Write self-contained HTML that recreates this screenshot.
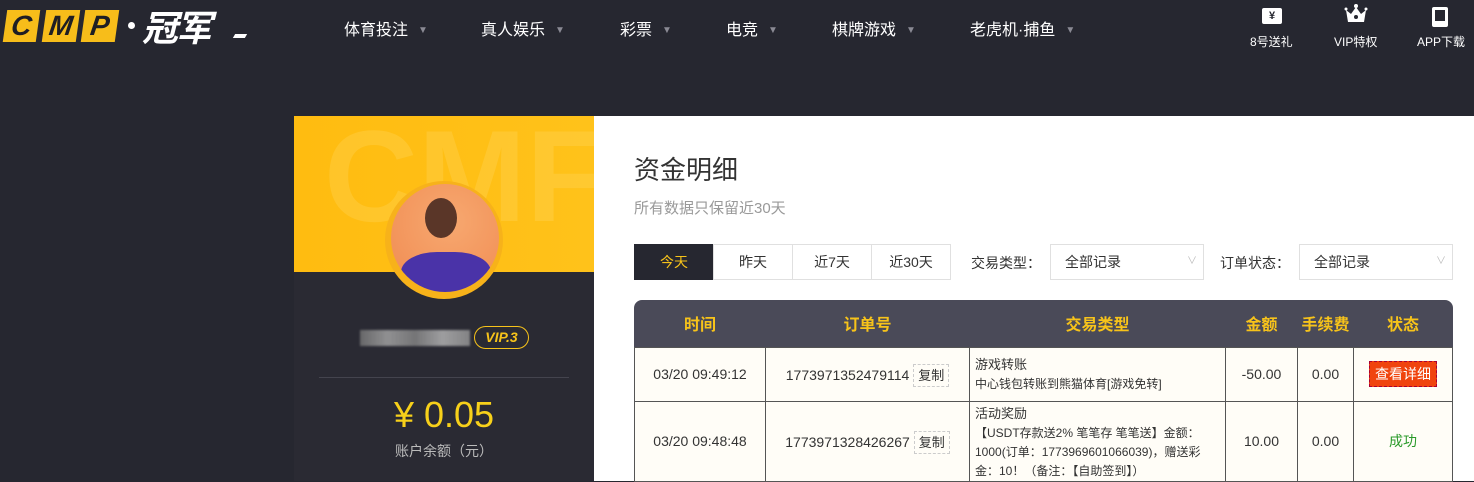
<!DOCTYPE html>
<html><head><meta charset="utf-8"><style>
*{margin:0;padding:0;box-sizing:border-box}
body{width:1474px;height:481px;overflow:hidden;background:#262730;font-family:"Liberation Sans","Noto Sans CJK SC",sans-serif;color:#fff;position:relative}
.abs{position:absolute}
.logo span.b{position:absolute;top:10px;width:34px;height:32px;background:#f7bd1a;color:#1e1e24;font:italic 900 28px/32px "Liberation Sans",sans-serif;text-align:center;transform:skewX(-8deg)}
.nav{position:absolute;top:16px;font-size:16px;color:#fff}
.nav i{font-style:normal;color:#8a8a94;font-size:10px;margin-left:10px;vertical-align:2px}
.ic{position:absolute;top:33px;font-size:12px;color:#fff;text-align:center}
.left{left:294px;top:116px;width:300px;height:365px;background:#2a2a33}
.yel{left:294px;top:116px;width:300px;height:156px;background:linear-gradient(90deg,#ffbc10,#ffc21a);overflow:hidden}
.main{left:594px;top:116px;width:880px;height:365px;background:#fff;color:#333}
.tab{position:absolute;top:244px;height:36px;border:1px solid #e0e0e0;font-size:14px;line-height:34px;text-align:center;color:#333}
.sel{position:absolute;top:244px;height:36px;border:1px solid #e0e0e0;font-size:14px;line-height:34px;padding-left:14px;color:#333}
table{position:absolute;left:634px;top:300px;width:819px;border-collapse:collapse;font-size:14px;color:#333}
th{color:#f7c31a;height:47px;font-size:16px;font-weight:bold}
td{border:1px solid #555;text-align:center;background:#fffdf7}
</style></head><body>
<div class="logo">
<span class="b" style="left:5px;width:33px">C</span><span class="b" style="left:44px">M</span><span class="b" style="left:83px">P</span>
<div class="abs" style="left:128px;top:22px;width:7px;height:7px;border-radius:50%;background:#fff"></div>
<div class="abs" style="left:142px;top:4px;font:italic bold 36px/44px 'Noto Sans CJK SC',sans-serif;color:#fff;letter-spacing:-2px">冠军</div>
<div class="abs" style="left:234px;top:34px;width:12px;height:4px;background:#fff;transform:skewX(-30deg)"></div>
</div>
<div class="nav" style="left:344px">体育投注<i>▼</i></div>
<div class="nav" style="left:481px">真人娱乐<i>▼</i></div>
<div class="nav" style="left:620px">彩票<i>▼</i></div>
<div class="nav" style="left:726px">电竞<i>▼</i></div>
<div class="nav" style="left:832px">棋牌游戏<i>▼</i></div>
<div class="nav" style="left:970px">老虎机·捕鱼<i>▼</i></div>
<div class="abs" style="left:1262px;top:8px;width:20px;height:16px;background:#fff;border-radius:2px;color:#262730;font-size:11px;font-weight:bold;text-align:center;line-height:16px">¥</div>
<div class="ic" style="left:1250px">8号送礼</div>
<svg class="abs" style="left:1344px;top:4px" width="24" height="20"><path d="M2 6l5 4 5-7 5 7 5-4-2 12H4z" fill="#fff"/><circle cx="12" cy="2" r="2" fill="#fff"/><circle cx="2" cy="5" r="1.5" fill="#fff"/><circle cx="22" cy="5" r="1.5" fill="#fff"/><circle cx="12" cy="13" r="2" fill="#262730"/></svg>
<div class="ic" style="left:1334px">VIP特权</div>
<div class="abs" style="left:1432px;top:7px;width:16px;height:20px;border:3px solid #fff;border-radius:2px;border-bottom-width:6px"></div>
<div class="ic" style="left:1417px">APP下载</div>

<div class="abs left"></div>
<div class="abs yel"><div style="position:absolute;left:30px;top:-5px;font:bold 130px/130px 'Liberation Sans',sans-serif;color:rgba(255,230,140,.2)">CMF</div></div>
<div class="abs" style="left:385px;top:181px;width:118px;height:118px;border-radius:50%;background:#f7b21a"></div>
<div class="abs" style="left:391px;top:184px;width:108px;height:108px;border-radius:50%;background:radial-gradient(circle at 55% 35%,#f7a870,#f08a50);overflow:hidden">
<div class="abs" style="left:34px;top:14px;width:32px;height:40px;border-radius:50%;background:#5a3628"></div>
<div class="abs" style="left:10px;top:68px;width:90px;height:50px;border-radius:40% 40% 0 0;background:#4a33a8"></div></div>
<div class="abs" style="left:360px;top:330px;width:110px;height:16px;background:linear-gradient(90deg,#777,#aaa,#888,#bbb,#999);filter:blur(1px);opacity:.8"></div>
<div class="abs" style="left:474px;top:326px;width:55px;height:23px;border:1px solid #f7c31a;border-radius:12px;color:#f7c31a;font:italic bold 14px/21px 'Liberation Sans',sans-serif;text-align:center">VIP.3</div>
<div class="abs" style="left:319px;top:377px;width:250px;height:1px;background:#44444e"></div>
<div class="abs" style="left:294px;top:393px;width:300px;text-align:center;color:#f7d01a;font-size:36px;line-height:44px">¥ 0.05</div>
<div class="abs" style="left:294px;top:441px;width:300px;text-align:center;color:#bbb;font-size:14px">账户余额（元）</div>

<div class="abs main"></div>
<div class="abs" style="left:634px;top:150px;font-size:26px;color:#333">资金明细</div>
<div class="abs" style="left:634px;top:197px;font-size:15px;color:#999">所有数据只保留近30天</div>
<div class="tab" style="left:634px;width:80px;background:#262730;color:#f7c31a;border-color:#262730">今天</div>
<div class="tab" style="left:713px;width:80px">昨天</div>
<div class="tab" style="left:792px;width:80px">近7天</div>
<div class="tab" style="left:871px;width:80px">近30天</div>
<div class="abs" style="left:971px;top:253px;font-size:14px;color:#333">交易类型：</div>
<div class="sel" style="left:1050px;width:154px">全部记录<span style="position:absolute;right:6px;color:#bbb;font-size:10px">∨</span></div>
<div class="abs" style="left:1220px;top:253px;font-size:14px;color:#333">订单状态：</div>
<div class="sel" style="left:1299px;width:154px">全部记录<span style="position:absolute;right:6px;color:#bbb;font-size:10px">∨</span></div>
<div class="abs" style="left:634px;top:300px;width:819px;height:47px;background:#4a4a58;border-radius:8px 8px 0 0"></div>
<table>
<tr><th style="width:131px">时间</th><th style="width:204px">订单号</th><th style="width:256px">交易类型</th><th style="width:72px">金额</th><th style="width:56px">手续费</th><th>状态</th></tr>
<tr style="height:54px"><td>03/20 09:49:12</td><td>1773971352479114 <span style="border:1px dashed #ccc;padding:3px 4px;font-size:13px">复制</span></td><td style="text-align:left;padding-left:5px;font-size:13px;line-height:19px">游戏转账<br><span style="font-size:12px">中心钱包转账到熊猫体育[游戏免转]</span></td><td>-50.00</td><td>0.00</td><td><span style="background:#f0440e;color:#fff;padding:4px 5px;font-size:14px;border:1px dashed #a03">查看详细</span></td></tr>
<tr style="height:77px"><td>03/20 09:48:48</td><td>1773971328426267 <span style="border:1px dashed #ccc;padding:3px 4px;font-size:13px">复制</span></td><td style="text-align:left;padding:2px 8px 0 5px;font-size:12px;line-height:19px;vertical-align:top"><span style="font-size:13px">活动奖励</span><br>【USDT存款送2% 笔笔存 笔笔送】金额：1000(订单：1773969601066039)，赠送彩金：10！（备注：【自助签到】）</td><td>10.00</td><td>0.00</td><td style="color:#2a9a2a">成功</td></tr>
</table>
</body></html>
